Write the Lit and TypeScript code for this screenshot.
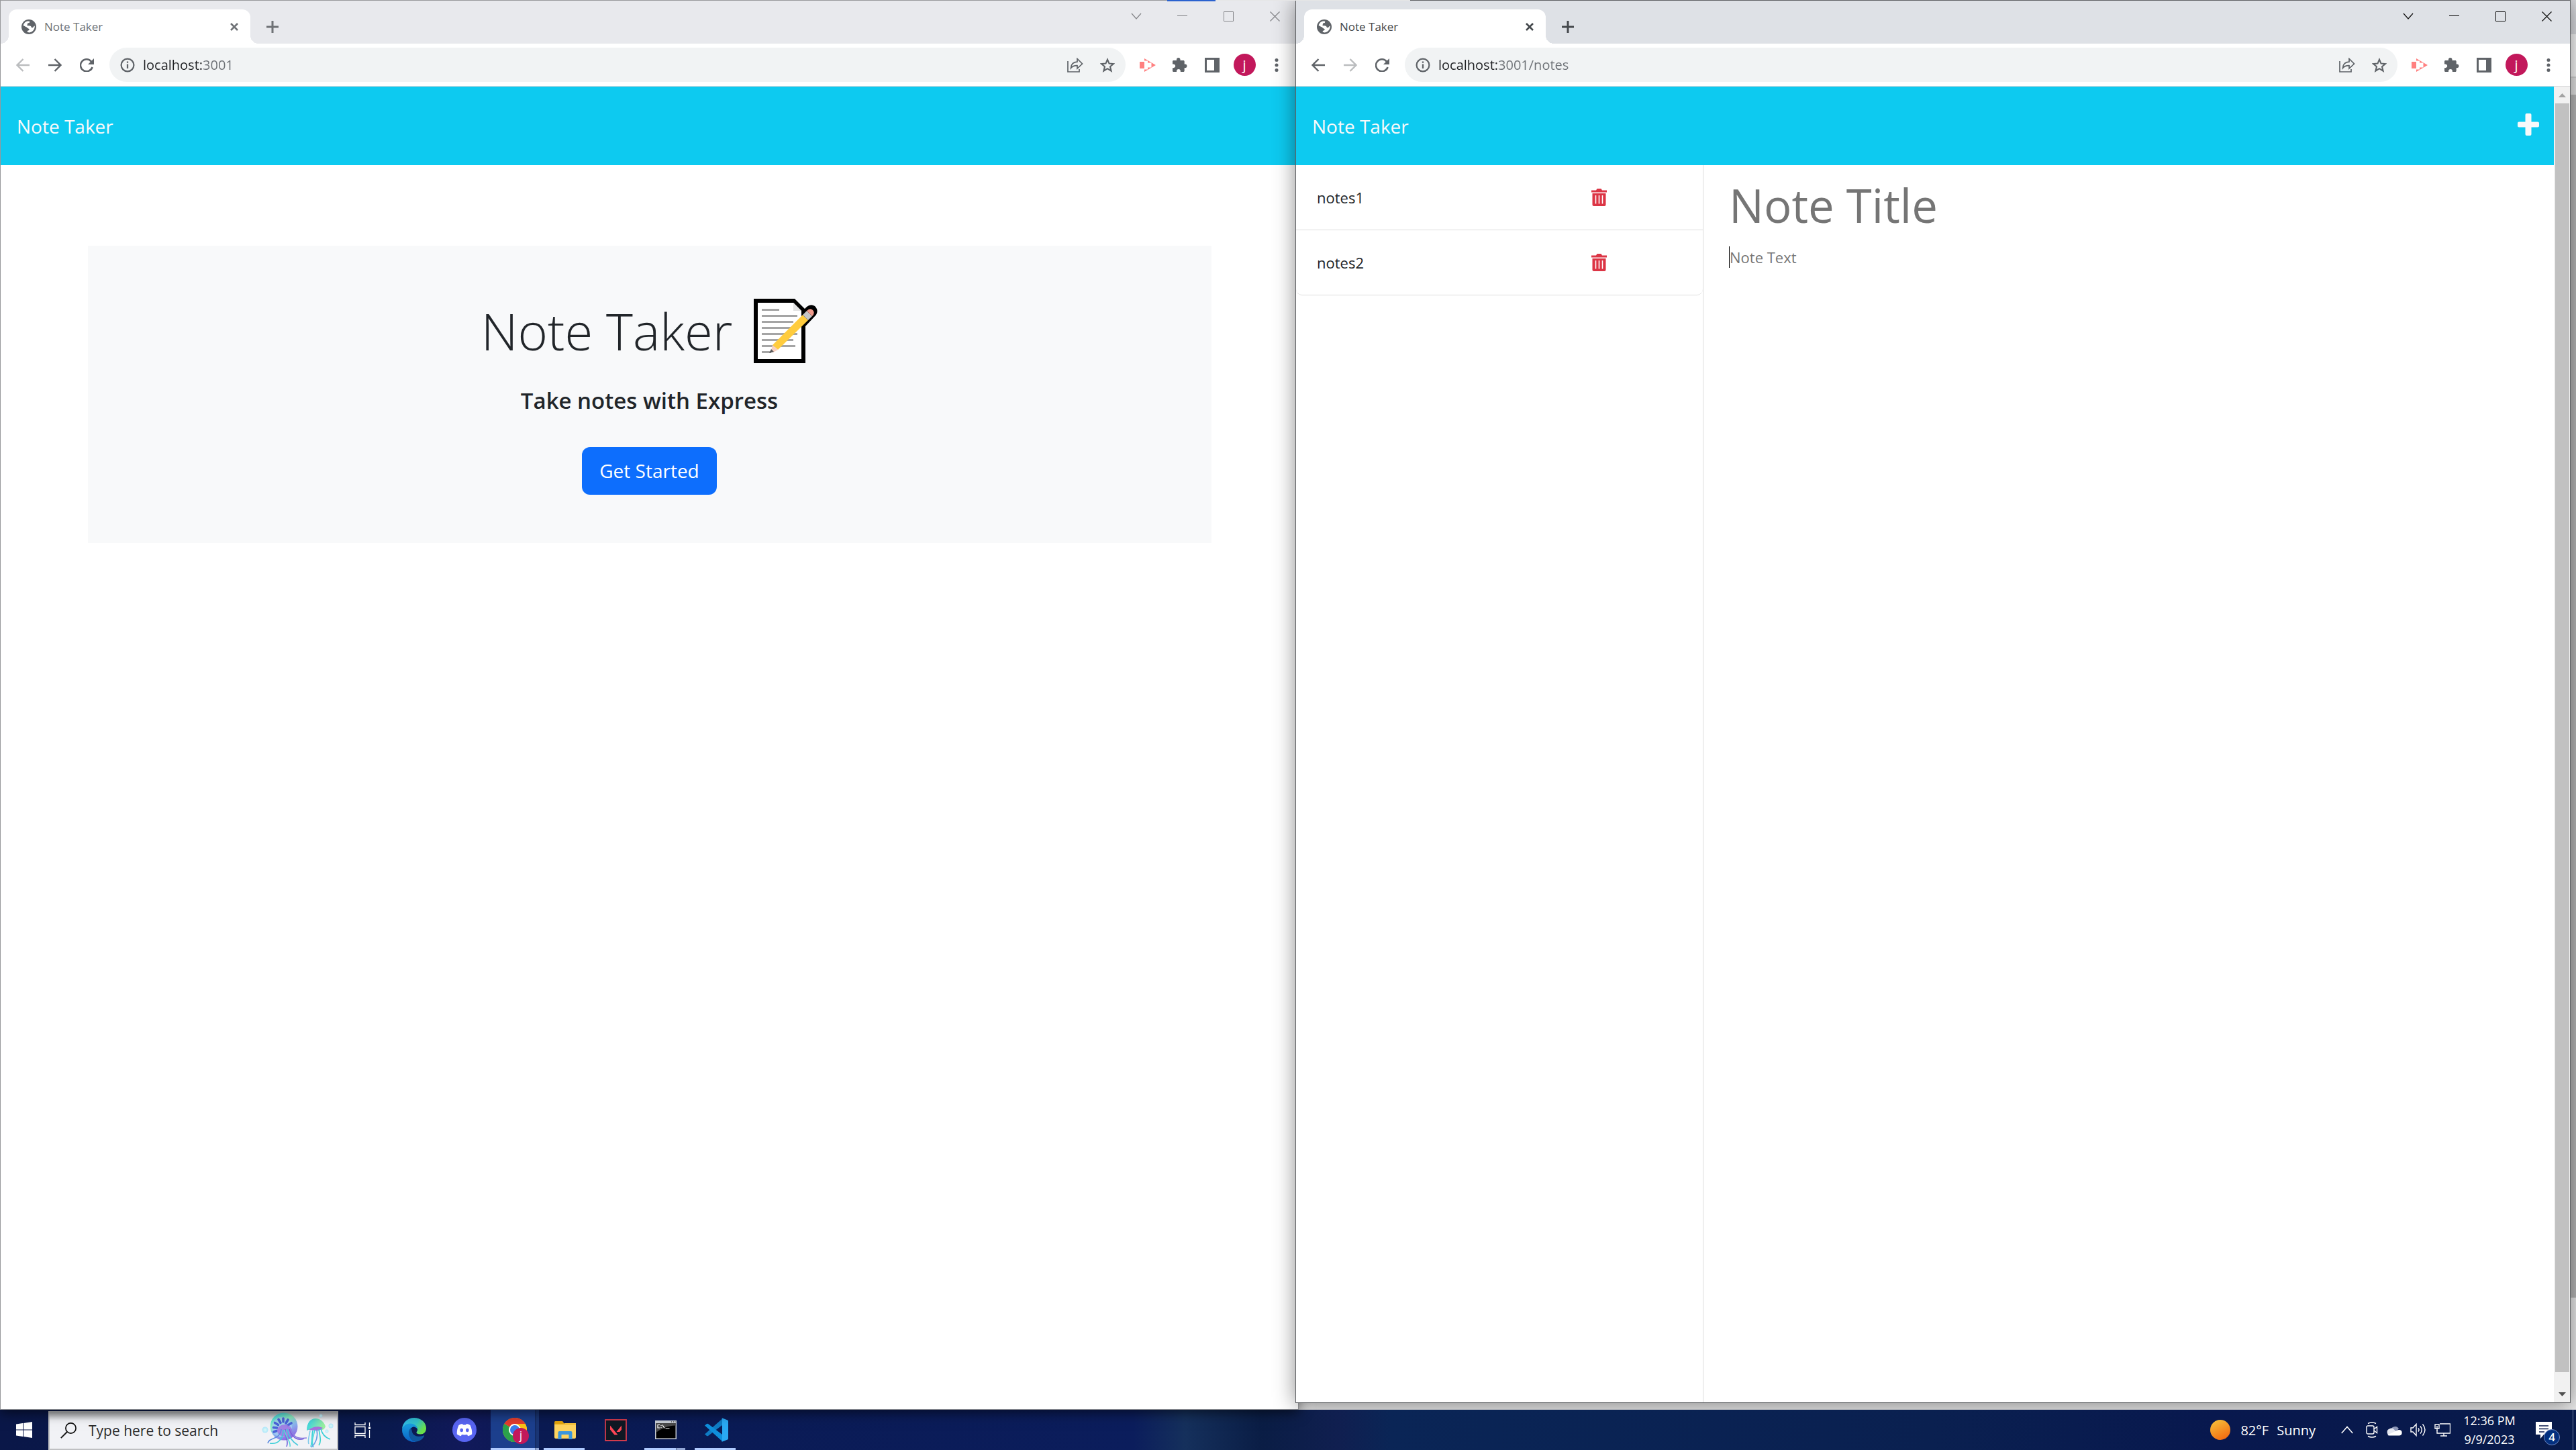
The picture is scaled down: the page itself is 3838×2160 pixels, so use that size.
import { LitElement, html, css, svg, nothing } from "lit";
import { customElement, property, state } from "lit/decorators.js";
import { classMap } from "lit/directives/class-map.js";

const icon = (body: unknown, w = 24, h = 24, box = `0 0 ${w} ${h}`) =>
  html`<svg width=${w} height=${h} viewBox=${box} fill="none" aria-hidden="true">${body}</svg>`;

/* ---------- browser chrome icons ---------- */
const globe = () => icon(svg`
  <circle cx="11" cy="11" r="11" fill="#5f6368"/>
  <path fill="#fff" d="M2.6 8.6C3.6 5.4 6 3.2 9.2 2.5l3.1.2L11.8 5 9.3 5.6 8.6 8c-.6 1 .4 1.400 1.600 1.200 3-.4 4.600 1 4.600 2.800l2 .2c1.200-1.400 2.200-2.400 3-2.600.2 5.400-3.400 9.600-8 9.800l-3.200-.6c0-1.800.8-2.400 2.200-2.600 1.600-.4 1-2.400-.6-2.800-1.200-.4-1.800-1.600-3-2.200-1.600-.6-3.400-1.200-4.600-2.600z"/>`, 22, 22);
const cross = () => icon(svg`<path d="M1 1l10 10M11 1L1 11" stroke="currentColor" stroke-width="2.600"/>`, 12, 12);
const plus = () => icon(svg`<path d="M9 0v18M0 9h18" stroke="currentColor" stroke-width="3"/>`, 18, 18);
const arrowLeft = () => icon(svg`<path d="M20 10H2M10.500 1L1.500 10l9 9" stroke="currentColor" stroke-width="2.400"/>`, 20, 20);
const arrowRight = () => icon(svg`<path d="M0 10h18M9.500 1l9 9-9 9" stroke="currentColor" stroke-width="2.400"/>`, 20, 20);
const reload = () => icon(svg`<path d="M18.600 13A9 9 0 1 1 17 4.600" stroke="currentColor" stroke-width="2.500"/><path d="M21 0v9h-9z" fill="currentColor"/>`, 22, 20);
const info = () => icon(svg`<circle cx="11" cy="11" r="9.400" stroke="#5f6368" stroke-width="2.200"/><path d="M11 9.500v6.500M11 5.500v2.300" stroke="#5f6368" stroke-width="2.300"/>`, 22, 22);
const share = () => icon(svg`<path d="M1 5v16h17v-4M5.500 15.500c.4-6 4-9 9.500-9.300V1.500l7.500 7.500-7.500 7v-4.300c-4-.2-7 .8-9.500 3.800z" stroke="#5f6368" stroke-width="1.700"/>`, 24, 22);
const star = () => icon(svg`<path d="M11 2.600l2.500 6 6.500.5-5 4.200 1.600 6.400-5.600-3.500-5.600 3.500L7 13.300 2 9.100l6.500-.5z" stroke="#5f6368" stroke-width="2.100"/>`, 22, 22);
const recorder = () => icon(svg`<path d="M0 5h7v10H0z" fill="#ff8080"/><path d="M7 0l17 10L7 20v-3.500h5v-3h5.500v-7H12v-3H7z" fill="#ff8080"/><path d="M7 6.500h4v7H7z" fill="#fff"/>`, 24, 20);
const puzzle = () => icon(svg`<path d="M0 5.500C0 4.700.7 4 1.500 4H6c-.4-2.400.8-4 2.700-4s3.200 1.600 2.800 4h4.700c.8 0 1.500.7 1.500 1.500v4.200c2.200-.5 3.800.8 3.800 2.700s-1.600 3.200-3.800 2.700v4.400c0 .8-.7 1.500-1.500 1.500h-4.300c.3-2.600-1-4-2.900-4s-3.300 1.400-3 4H1.500C.7 21 0 20.300 0 19.500v-4.300c2.600.3 4.200-1 4.200-2.900S2.600 9.200 0 9.500z" fill="#5f6368"/>`, 22, 22);
const panel = () => icon(svg`<path d="M0 0h22v22H0zM3 3v16h11V3z" fill="#5f6368" fill-rule="evenodd"/>`, 22, 22);
const dots = () => icon(svg`<g fill="#5f6368"><circle cx="3" cy="2.500" r="2.500"/><circle cx="3" cy="10" r="2.500"/><circle cx="3" cy="17.500" r="2.500"/></g>`, 6, 20);
const winChevron = () => icon(svg`<path d="M1 1l7 8 7-8" stroke="currentColor" stroke-width="1.300"/>`, 16, 10);
const winMin = () => icon(svg`<path d="M0 7.500h15" stroke="currentColor"/>`, 15, 16);
const winMax = () => icon(svg`<path d="M.5.5h14v14H.5z" stroke="currentColor"/>`, 15, 15);
const winClose = () => icon(svg`<path d="M.5.5l14 14m0-14l-14 14" stroke="currentColor" stroke-width="1.300"/>`, 15, 15);

/* ---------- page icons ---------- */
const addNote = () => icon(svg`<path d="M13.500 0h5q2 0 2 2V12.500H30Q32 12.500 32 14.500v4q0 2-2 2H20.500V31q0 2-2 2h-5q-2 0-2-2V20.500H2q-2 0-2-2v-4q0-2 2-2h9.500V2q0-2 2-2z" fill="#f8f9fa"/>`, 32, 33);
const trash = () => icon(svg`<path d="M0 2.500h7L8.500 0h6L16 2.500h7v3H0z" fill="#dc3545"/><path d="M1.500 7h20v17q0 2-2 2h-16q-2 0-2-2z" fill="#dc3545"/><path d="M6.500 10v12.500M11.500 10v12.500M16.500 10v12.500" stroke="#fff" stroke-width="1.600"/>`, 23, 26);
const memo = () => icon(svg`
  <path d="M0 0h61l15 15 3-3q6-5 12-1 6 6 2 13L77 41v55H0z" fill="#000"/>
  <path d="M6 6h53l12 12v72H6z" fill="#fff"/>
  <path d="M59 6v12h12z" fill="#e3e3e3"/>
  <path d="M12 16.500h26M12 25.500h53M12 34.500h47M12 43.500h44M12 52.500h53M12 61.500h47M12 70.500h50M12 79.500h14" stroke="#a5a5a5" stroke-width="3"/>
  <path d="M28 69l45-45 8 8-45 44z" fill="#ffcc3d"/>
  <path d="M73 24l6-6 8 8-6 6z" fill="#c4c4c4"/>
  <path d="M79 18q5-5 9-1t-1 9z" fill="#f09a8a"/>
  <path d="M28 69l8 7-7 4-3-3z" fill="#f8d0c0"/>
  <path d="M26 75l4 4-7 2z" fill="#5a5a5a"/>`, 95, 96);

/* ---------- taskbar icons ---------- */
const winLogo = () => icon(svg`<path fill="#fff" d="M0 3.500l10-1.400V11.500H0zM11 2l13-2v11.500H11zM0 12.500h10V22L0 20.600zM11 12.500h13V24l-13-1.900z"/>`, 24, 24);
const lens = () => icon(svg`<circle cx="15.500" cy="8.500" r="7.600" stroke="#111" stroke-width="1.700"/><path d="M10 14L.8 23.200" stroke="#111" stroke-width="1.900"/>`, 24, 24);
const taskView = () => icon(svg`<g stroke="#fff" stroke-width="1.300"><path d="M1 0v3.500h15V0M1 23v-3.500h15V23M1 6.500h15v10H1zM22.500 0v5.500M22.500 11v12"/></g><path d="M21 6.500h3v3.500h-3z" fill="#fff"/>`, 24, 23);
const edge = () => icon(svg`
  <defs>
    <linearGradient id="e1" x1="0" y1="0" x2="1" y2=".5"><stop stop-color="#2fb6ee"/><stop offset=".6" stop-color="#33c3c8"/><stop offset="1" stop-color="#6be04a"/></linearGradient>
    <linearGradient id="e2" x1="0" y1="0" x2="0" y2="1"><stop stop-color="#1aa0e0"/><stop offset="1" stop-color="#0a62c4"/></linearGradient>
  </defs>
  <path d="M18 0c10 0 18 7 18 15.500 0 6-4 9-8.500 9-4 0-6-1.200-6-2.500 0-1.500 1.500-1.500 1.500-4.500 0-4-4-7.500-9.500-7.500C7 10 2 13 0 17 .5 7 8.500 0 18 0z" fill="url(#e1)"/>
  <path d="M0 18c1-5.500 6-9.500 12-9.500 7 0 11 4.500 11 9-1-3-4-4-6-4-4 1-6.500 5-6.500 9.500 0 7 5 12 11 12.700-1 .2-2.300.3-3.500.3C8 36 0 28 0 18z" fill="url(#e2)"/>
  <path d="M13 15.500c-2.500 2-3.500 5-3 8.500.8 6.500 6 11.500 12 11.500 5-1 9-4 11-8 .5-1-.3-1.600-1.200-1.100-6 2.600-13.500 1.600-16.300-4-1.200-2.500-.7-5-2.500-6.900z" fill="#10579f"/>`, 36, 36);
const discord = () => icon(svg`
  <circle cx="18" cy="18" r="18" fill="#5865f2"/>
  <path d="M9.500 11c2-1.200 4-1.800 5.500-2l.8 1.500h4.400L21 9c1.500.2 3.500.8 5.500 2 2.200 4.500 3 9 2.700 13.500-2 1.500-4 2.300-6 2.700L22 25c-2.500.6-5.500.6-8 0l-1.200 2.200c-2-.4-4-1.200-6-2.700C6.500 20 7.300 15.500 9.500 11z" fill="#fff"/>
  <ellipse cx="13.700" cy="18.500" rx="2.300" ry="2.700" fill="#5865f2"/><ellipse cx="22.300" cy="18.500" rx="2.300" ry="2.700" fill="#5865f2"/>`, 36, 36);
const chrome = () => icon(svg`
  <circle cx="18" cy="18" r="18" fill="#fbc116"/>
  <path d="M18 18L2.400 9A18 18 0 0 1 33.600 9z" fill="#e33b2e"/>
  <path d="M2.400 9A18 18 0 0 0 18 36l8-13.500-8-4.500z" fill="#2ba24c"/>
  <path d="M18 9h15.600A18 18 0 0 1 18 36l7.800-13.500z" fill="#fbc116"/>
  <circle cx="18" cy="18" r="9" fill="#fff"/><circle cx="18" cy="18" r="7" fill="#3b7ded"/>`, 36, 36);
const explorer = () => icon(svg`
  <path d="M0 1.500Q0 0 1.500 0H12l3 4H0z" fill="#e2a30b"/><path d="M0 4h32v20q0 2-2 2H2q-2 0-2-2z" fill="#ffd45e"/><path d="M0 4h13l3-1h16v3H0z" fill="#f5c23c"/>
  <path d="M5.500 27V17q0-2 2-2h17q2 0 2 2v10h-5v-7h-11v7z" fill="#3a96dd"/>`, 32, 27);
const valorant = () => icon(svg`
  <path d="M1 1h31v31H1z" fill="#0f1823" stroke="#d13b4c" stroke-width="1.800"/>
  <path d="M8 9.500l11.500 14h-5L8 15.500zM25 9.500v6.300l-2.700 3.300h-4.800z" fill="#ff4655"/>`, 33, 33);
const terminal = () => icon(svg`
  <path d="M0 0h32v28H0z" fill="#c9ced6"/><path d="M1.500 4h29v22.500h-29z" fill="#000"/><path d="M1.500 4h29v3.500c-12 .5-22 5-29 10.500z" fill="#4a4a4a"/>
  <path d="M7 6.500H4v4.500h3M9 7v1M9 10v1M11 6.500l3 5M15.500 12h6" stroke="#fff" stroke-width="1.200"/><path d="M24 2h1M27 2h1M29.500 2h1" stroke="#555" stroke-width="1.500"/>`, 32, 28);
const vscode = () => icon(svg`
  <path d="M1 24.500l3 2.400q1 .7 2 0L27 11V1.500z" fill="#0f7cc4"/>
  <path d="M1 11.500l3-2.400q1-.7 2 0L27 25v10z" fill="#0f8fdc"/>
  <path d="M26 0l9 3.500q1 .5 1 1.500v26q0 1-1 1.500L26 36q1-.5 1-2V2q0-1.500-1-2z" fill="#2aa9f3"/>`, 36, 36);
const sun = () => icon(svg`
  <defs><linearGradient id="s1" x1=".2" y1="0" x2=".7" y2="1"><stop stop-color="#f6bf3a"/><stop offset="1" stop-color="#f26a10"/></linearGradient></defs>
  <circle cx="15" cy="15" r="15" fill="url(#s1)"/>`, 30, 30);
const caretUp = () => icon(svg`<path d="M.7 11l8.300-9.500 8.300 9.500" stroke="#fff" stroke-width="1.500"/>`, 18, 12);
const meetNow = () => icon(svg`<g stroke="#fff" stroke-width="1.400"><path d="M3 2.500q6-3 12 0M3 21.500q6 3 12 0"/><rect x="1" y="6" width="11" height="12" rx="2"/><path d="M12 11l4.500-3.500v9L12 13"/></g>`, 18, 24);
const cloud = () => icon(svg`<path d="M7 8a6.500 6.500 0 0 1 12-1.500l-6 5z" fill="#8e98b8"/><path d="M5 16a5 5 0 0 1 0-9.500 6 6 0 0 1 7.500 1.500l6 8z" fill="#e4e7f0"/><path d="M4 16.500h16a4.300 4.300 0 0 0 0-8.500 6 6 0 0 0-5 1.500L2 15.500z" fill="#fff"/>`, 24, 17);
const volume = () => icon(svg`<g stroke="#fff" stroke-width="1.400"><path d="M1 7h3l5-5.500v17L4 13H1z"/><path d="M12 7.500q2 2.500 0 5M15 4.500q4.500 5.500 0 11M18.500 1.500q7 8.500 0 17"/></g>`, 24, 20);
const network = () => icon(svg`<g stroke="#fff" stroke-width="1.400"><path d="M8 1h15.500v14H4V10M14 15v4M9 19h10"/><path d="M1 2h6v6H1zM4 4v7"/></g>`, 24, 20);
const notices = () => icon(svg`<path d="M0 0h24v19H12l-5 6v-6H0z" fill="#fff"/><path d="M5 6h14M5 10.500h14M5 15h8" stroke="#0a1a4e" stroke-width="1.300"/>`, 24, 25);
const jellyfish = () => icon(svg`
  <defs>
    <linearGradient id="j1" x1=".2" y1="0" x2=".7" y2="1"><stop stop-color="#3fd8ea"/><stop offset=".35" stop-color="#8ff0c0"/><stop offset=".6" stop-color="#8ab6ee"/><stop offset="1" stop-color="#8d5be0"/></linearGradient>
    <linearGradient id="j2" x1="0" y1="0" x2="1" y2=".3"><stop stop-color="#2fd0ea"/><stop offset="1" stop-color="#9af0a0"/></linearGradient>
    <radialGradient id="j3"><stop stop-color="#d9fbf8"/><stop offset="1" stop-color="#b0e6fa"/></radialGradient>
  </defs>
  <g transform="translate(-2 0)">
    <circle cx="36" cy="23" r="20.500" fill="url(#j1)"/>
    <circle cx="33" cy="24" r="15" fill="#a6cff2" opacity=".75"/>
    <g stroke="#4a63d8" stroke-width="3.600" stroke-linecap="round"><path d="M21 31l4-1.500M20.500 24.500l5 .5M22.500 17.500l5 3M28 12.500l3 5M35 11v5M42 13l-3 5M47 18l-5 3"/></g>
    <ellipse cx="37" cy="29" rx="11" ry="9" fill="#a06fe2" opacity=".8"/>
    <g stroke-width="1.600"><path d="M32 27C30 44 14 38 12 48" stroke="#5b8ae0"/><path d="M35 28c0 14-8 22-20 20" stroke="#38cfd8"/><path d="M38 27c-1 14 6 16 2 26" stroke="#6f63dc"/><path d="M41 27c2 10 6 18 16 24" stroke="#44c8dc"/><path d="M44 27c4 12 12 18 22 14" stroke="#7a62d8"/><path d="M37 28c2 12 10 18 8 25" stroke="#5bd7d6"/><path d="M46 26c4 12 8 16 24 14" stroke="#8d7de0"/></g>
  </g>
  <path d="M68 29c0-12 6-18 13-18 8 0 13 6 15 12-1 3-3 5-6 5-4-2-14-2-22 1z" fill="url(#j2)"/>
  <path d="M71 28c6-5 14-6 21-3-3 4-8 5-12 4z" fill="#a573dd"/>
  <g stroke-width="1.600"><path d="M77 29c-2 8 0 16-3 24" stroke="#33cfd8"/><path d="M80 28c-2 10-6 18-2 26" stroke="#45d7da"/><path d="M83 28c2 10 0 18-8 26" stroke="#6b9fe6"/><path d="M86 27c2 12 4 18 0 24" stroke="#39d4cf"/><path d="M89 26c2 10 8 14 14 16" stroke="#37cfd8"/><path d="M73 29c-1 8-4 14-2 20" stroke="#7cc9ea"/></g>
  <circle cx="6" cy="28" r="4.500" fill="url(#j3)"/><circle cx="89" cy="7" r="2.500" fill="url(#j3)"/><circle cx="104" cy="22" r="3.500" fill="url(#j3)"/><circle cx="98" cy="30" r="2.500" fill="url(#j3)"/>`, 108, 58);

const reset = css`
  * { box-sizing: border-box; }
  button, input, textarea { font: inherit; color: inherit; background: none; border: 0; padding: 0; margin: 0; outline: 0; border-radius: 0; }
  h1, h2, p, ul { margin: 0; padding: 0; font-weight: inherit; }
  ul { list-style: none; }
  button { display: grid; place-items: center; flex: none; }
  svg { display: block; flex: none; }
`;

@customElement("browser-window")
class BrowserWindow extends LitElement {
  @property({ type: Boolean, reflect: true }) active = false;
  @property() host = "";
  @property() path = "";

  static styles = [reset, css`
    :host { display: flex; flex-direction: column; border: 1px solid #97989b; background: #fff; --strip: #e8e9ed; --tool: #85868a; --tab: #6f7276; }
    :host([active]) { border-color: #5f6164; --strip: #dee1e6; --tool: #111; --tab: #45494d; }
    .strip { display: flex; height: 64px; background: var(--strip); }
    .tab { position: relative; display: flex; align-items: center; width: 360px; margin: 13px 12px 0; padding: 0 18px 0 19px; background: #fff; border-radius: 12px 12px 0 0; color: var(--tab); font-size: 17px; }
    .tab::before, .tab::after { content: ""; position: absolute; bottom: 0; width: 12px; height: 12px; }
    .tab::before { left: -12px; background: radial-gradient(circle at 0 0, transparent 12px, #fff 12px); }
    .tab::after { right: -12px; background: radial-gradient(circle at 100% 0, transparent 12px, #fff 12px); }
    .name { flex: 1; margin-left: 12px; }
    .new { width: 42px; margin-top: 13px; color: var(--tab); }
    .controls { display: flex; margin-left: auto; }
    .controls button { width: 69px; height: 46px; color: var(--tool); }
    .toolbar { display: flex; align-items: center; gap: 9px; height: 64px; padding: 0 8px 0 9px; border-bottom: 1px solid #d8d8da; color: #5f6368; }
    .group { display: flex; }
    .group button { width: 48px; height: 48px; }
    .dim { opacity: .42; }
    .omni { flex: 1; display: flex; align-items: center; height: 51px; padding: 0 3px 0 16px; border-radius: 26px; background: #f1f3f4; }
    .url { flex: 1; min-width: 0; margin-left: 12px; height: 30px; font-size: 20px; color: #5f6368; -webkit-text-fill-color: transparent; -webkit-background-clip: text; background-clip: text; background-image: linear-gradient(90deg, #202124 88px, #6c7075 88px); }
    .avatar { display: grid; place-items: center; width: 33px; height: 33px; border-radius: 50%; background: #c2185b; color: #fff; font-size: 20px; line-height: 30px; }
    .view { flex: 1; display: flex; min-height: 0; }
    .page { flex: 1; min-width: 0; display: flex; flex-direction: column; }
    .bar { display: flex; flex-direction: column; width: 24px; background: #f1f1f1; }
    .bar button { height: 25px; }
    .thumb { flex: 1; margin: 0 1px 20px 2px; background: #c1c1c1; }
  `];

  render() {
    return html`
      <div class="strip">
        <div class="tab">${globe()}<span class="name">Note Taker</span><button aria-label="Close tab">${cross()}</button></div>
        <button class="new" aria-label="New tab">${plus()}</button>
        <div class="controls">
          <button aria-label="Search tabs">${winChevron()}</button>
          <button aria-label="Minimize">${winMin()}</button>
          <button aria-label="Maximize">${winMax()}</button>
          <button aria-label="Close">${winClose()}</button>
        </div>
      </div>
      <div class="toolbar">
        <div class="group">
          <button class=${classMap({ dim: !this.active })} aria-label="Back">${arrowLeft()}</button>
          <button class=${classMap({ dim: this.active })} aria-label="Forward">${arrowRight()}</button>
          <button aria-label="Reload">${reload()}</button>
        </div>
        <div class="omni">
          ${info()}
          <input class="url" aria-label="Address" .value=${this.host + this.path} />
          <div class="group">
            <button aria-label="Share">${share()}</button>
            <button aria-label="Bookmark">${star()}</button>
          </div>
        </div>
        <div class="group">
          <button aria-label="Recorder">${recorder()}</button>
          <button aria-label="Extensions">${puzzle()}</button>
          <button aria-label="Side panel">${panel()}</button>
          <button aria-label="Profile"><span class="avatar">j</span></button>
          <button aria-label="Menu">${dots()}</button>
        </div>
      </div>
      <div class="view">
        <div class="page"><slot></slot></div>
        ${this.active ? html`<div class="bar">
          <button aria-label="Scroll up">${icon(svg`<path d="M0 6l5.500-6L11 6z" fill="#a3a3a3"/>`, 11, 6)}</button>
          <div class="thumb"></div>
          <button aria-label="Scroll down">${icon(svg`<path d="M0 0l5.500 6L11 0z" fill="#505050"/>`, 11, 6)}</button>
        </div>` : nothing}
      </div>`;
  }
}

const pageStyles = css`
  :host { flex: 1; display: flex; flex-direction: column; color: #212529; }
  .navbar { display: flex; align-items: center; justify-content: space-between; height: 117px; padding: 0 22px 0 24px; background: #0dcaf0; color: #f8f9fa; }
  .brand { font-size: 28px; color: inherit; text-decoration: none; }
`;

@customElement("landing-page")
class LandingPage extends LitElement {
  static styles = [reset, pageStyles, css`
    .card { width: 100%; max-width: 1674px; margin: 120px auto 0; padding: 76px 72px 72px; display: flex; flex-direction: column; align-items: center; background: #f8f9fa; }
    .title { display: flex; align-items: center; gap: 32px; height: 101px; font-size: 76px; font-weight: 300; line-height: 101px; }
    .lead { margin-top: 32px; font-size: 33px; font-weight: 600; line-height: 43px; }
    .start { display: block; margin-top: 48px; padding: 0 26px; border-radius: 12px; background: #0d6efd; color: #fff; font-size: 28px; line-height: 71px; text-decoration: none; }
  `];
  render() {
    return html`
      <nav class="navbar"><a class="brand" href="/">Note Taker</a></nav>
      <main class="card">
        <h1 class="title"><span>Note Taker</span>${memo()}</h1>
        <p class="lead">Take notes with Express</p>
        <a class="start" href="/notes">Get Started</a>
      </main>`;
  }
}

@customElement("notes-page")
class NotesPage extends LitElement {
  @state() private notes = ["notes1", "notes2"];
  static styles = [reset, pageStyles, css`
    .add { padding-bottom: 4px; }
    .body { flex: 1; display: grid; grid-template-columns: minmax(0, 607px) minmax(0, 1fr); }
    .list { border-right: 1px solid #dcdcdc; }
    .item { display: flex; height: 97px; padding: 0 143px 0 31px; border-bottom: 1px solid #dcdcdc; }
    .item:last-child { border-radius: 0 0 9px 9px; }
    .note { flex: 1; justify-content: start; font-size: 22px; }
    .editor { display: flex; flex-direction: column; padding: 8px 38px; }
    .title { height: 101px; font-size: 69px; }
    .text { flex: 1; margin-top: 4px; padding: 8px 0; resize: none; font-size: 22px; line-height: 33px; background: linear-gradient(#000, #000) 0 8px / 1px 32px no-repeat; text-indent: 1px; }
    ::placeholder { color: #757575; opacity: 1; }
  `];
  render() {
    return html`
      <nav class="navbar"><a class="brand" href="/">Note Taker</a><button class="add" aria-label="New note">${addNote()}</button></nav>
      <main class="body">
        <section class="list">
          <ul>
            ${this.notes.map((n) => html`<li class="item"><button class="note">${n}</button><button aria-label="Delete ${n}">${trash()}</button></li>`)}
          </ul>
        </section>
        <section class="editor">
          <input class="title" aria-label="Note title" placeholder="Note Title" />
          <textarea class="text" aria-label="Note text" placeholder="Note Text"></textarea>
        </section>
      </main>`;
  }
}

interface App {
  name: string;
  art: () => unknown;
  open?: boolean;
  current?: boolean;
  stacked?: boolean;
}

const apps: App[] = [
  { name: "Microsoft Edge", art: edge },
  { name: "Discord", art: discord },
  { name: "Google Chrome", art: chrome, open: true, current: true },
  { name: "File Explorer", art: explorer, open: true },
  { name: "Valorant", art: valorant },
  { name: "Command Prompt", art: terminal, open: true, stacked: true },
  { name: "Visual Studio Code", art: vscode, open: true },
];

@customElement("system-tray")
class SystemTray extends LitElement {
  static styles = [reset, css`
    :host { display: flex; align-items: center; height: 60px; color: #fff; font-size: 20px; }
    .weather { display: flex; align-items: center; gap: 15px; margin-right: 38px; }
    .temp { display: flex; gap: 12px; }
    .icons { display: flex; align-items: center; gap: 12px; margin-right: 16px; }
    .chevron { margin-right: 7px; }
    .clock { display: block; width: 84px; margin-right: 27px; font-size: 18px; line-height: 28px; text-align: center; }
    .clock span { display: block; }
    .notice { position: relative; margin-right: 31px; }
    .count { position: absolute; left: 12px; top: 11px; width: 24px; height: 24px; border: 1px solid #6d86c0; border-radius: 50%; background: #03307f; font-size: 17px; line-height: 22px; font-weight: 600; }
    .peek { width: 5px; height: 60px; border-left: 1px solid #6f7ba0; }
  `];
  render() {
    return html`
      <button class="weather">${sun()}<span class="temp"><span>82°F</span><span>Sunny</span></span></button>
      <div class="icons">
        <button class="chevron" aria-label="Show hidden icons">${caretUp()}</button>
        <button aria-label="Meet now">${meetNow()}</button>
        <button aria-label="OneDrive">${cloud()}</button>
        <button aria-label="Volume">${volume()}</button>
        <button aria-label="Network">${network()}</button>
      </div>
      <button class="clock"><span>12:36 PM</span><span>9/9/2023</span></button>
      <button class="notice" aria-label="Notifications">${notices()}<span class="count">4</span></button>
      <button class="peek" aria-label="Show desktop"></button>`;
  }
}

@customElement("task-bar")
class TaskBar extends LitElement {
  static styles = [reset, css`
    :host { display: flex; height: 60px; color: #fff; background: linear-gradient(90deg, #0a1748, #0a1a4e 15%, #11195a 18%, #0a1a52 21%, #0b1d5c 44%, #15305c 46%, #0a1d45 49%, #101f50 52%, #0a2556 54%, #0a2050 75%, #08184e 86%, #081a4a); }
    .start, .view { width: 72px; }
    .search { display: flex; align-items: center; width: 432px; margin-top: 2px; padding: 0 5px 0 16px; border: 2px solid #bfc0c3; background: linear-gradient(#b5b6b9, #f1f2f6 12px); color: #222; }
    .search input { flex: 1; min-width: 0; margin-left: 18px; font-size: 21px; }
    .search input::placeholder { color: #2b2b2b; opacity: 1; }
    .apps { display: flex; gap: 3px; margin-left: 5px; }
    .app { position: relative; width: 72px; height: 60px; }
    .open::after { content: ""; position: absolute; left: 4px; bottom: 0; width: 61px; height: 3px; background: #b0cbff; }
    .stacked::after { background: linear-gradient(90deg, #b0cbff 47px, #6f83ae 47px, #6f83ae 49px, #92a7d6 49px); }
    .current { background: linear-gradient(90deg, #1c3f8d 66px, #142c66 66px, #142c66 68px, #1a3574 68px); }
    .current::after { left: 0; width: 72px; background: linear-gradient(90deg, #b0cbff 66px, #6f83ae 66px, #6f83ae 68px, #92a7d6 68px); }
    .badge { position: absolute; left: 33px; top: 27px; width: 24px; height: 24px; border-radius: 50%; background: #c2185b; color: #fff; font-size: 16px; line-height: 22px; text-align: center; }
    .tray { margin-left: auto; }
  `];
  render() {
    return html`
      <button class="start" aria-label="Start">${winLogo()}</button>
      <label class="search">${lens()}<input aria-label="Search" placeholder="Type here to search" />${jellyfish()}</label>
      <button class="view" aria-label="Task view">${taskView()}</button>
      <div class="apps">
        ${apps.map((a) => html`<button aria-label=${a.name} class=${classMap({ app: true, open: !!a.open, current: !!a.current, stacked: !!a.stacked })}>${a.art()}${a.current ? html`<span class="badge">j</span>` : nothing}</button>`)}
      </div>
      <system-tray class="tray"></system-tray>`;
  }
}

@customElement("app-root")
class AppRoot extends LitElement {
  static styles = [reset, css`
    :host { display: grid; grid-template-rows: minmax(0, 1fr) auto; height: 100vh; overflow: hidden; background: #0a1a4e; font-family: "Open Sans", "Noto Sans", sans-serif; }
    .desktop { position: relative; z-index: 1; }
    .back { position: absolute; inset: 0 0 0 calc(50% + 16px); display: flex; flex-direction: column; align-items: end; background: #e9e9e9; }
    .back-strip { width: 100%; height: 51px; background: #d9dade; }
    .back-tools { width: 100%; height: 65px; background: #f6f6f6; border-bottom: 2px solid #d2d2d2; }
    .back-arrow { width: 16px; height: 25px; background: #e2e2e2; }
    .back-thumb { width: 16px; flex: 1; max-height: 1792px; background: #b6b6b6; }
    .left { position: absolute; inset: 0 auto 0 0; width: calc(50% + 16px); box-shadow: 0 4px 18px rgba(0, 0, 0, .6); }
    .right { position: absolute; inset: 0 8px 10px calc(50% + 11px); box-shadow: 0 2px 30px rgba(0, 0, 0, .45); clip-path: inset(0 -8px -10px -40px); }
    .sliver { position: absolute; top: 0; left: calc(50% - 180px); width: 362px; height: 1px; background: #e6e6e6; }
    .sliver::before { content: ""; position: absolute; left: 0; top: 0; width: 72px; height: 2px; background: #2a62cf; }
  `];
  render() {
    return html`
      <div class="desktop">
        <div class="back"><div class="back-strip"></div><div class="back-tools"></div><div class="back-arrow"></div><div class="back-thumb"></div></div>
        <browser-window class="left" host="localhost" path=":3001"><landing-page></landing-page></browser-window>
        <browser-window class="right" active host="localhost" path=":3001/notes"><notes-page></notes-page></browser-window>
        <div class="sliver"></div>
      </div>
      <task-bar></task-bar>`;
  }
}
